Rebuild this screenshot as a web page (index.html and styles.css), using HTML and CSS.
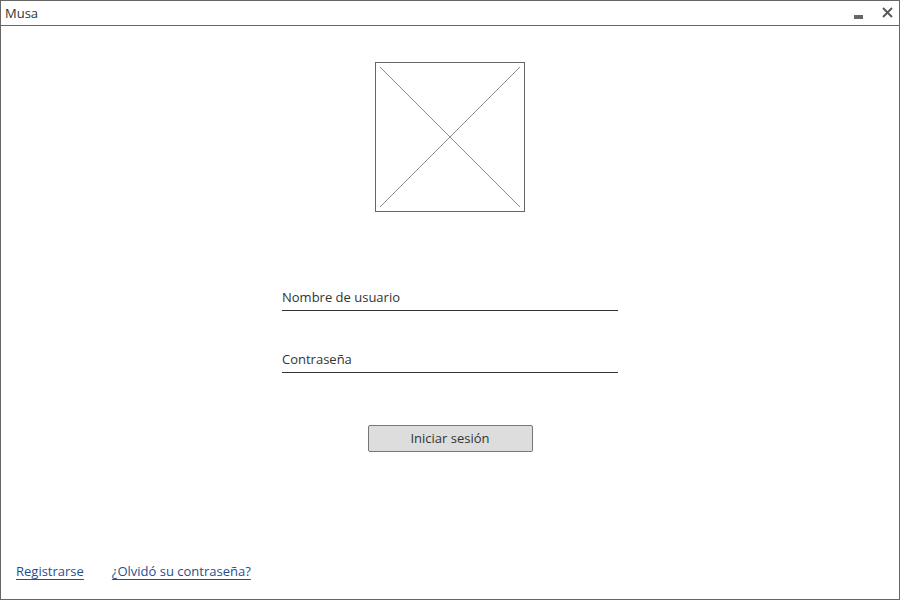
FILE: index.html
```html
<!DOCTYPE html>
<html lang="es">
<head>
<meta charset="utf-8">
<title>Musa</title>
<link rel="stylesheet" href="styles.css">
</head>
<body>
<div class="window">
  <div class="titlebar">
    <span class="title">Musa</span>
    <div class="controls">
      <span class="min"></span>
      <svg class="close" width="11" height="11" viewBox="0 0 11 11"><path d="M1 1L10 10M10 1L1 10" stroke="#555" stroke-width="1.8" fill="none"/></svg>
    </div>
  </div>
  <div class="content">
    <div class="logo">
      <svg width="148" height="148" viewBox="0 0 148 148"><path d="M4 4L144 144M144 4L4 144" stroke="#8a8a8a" stroke-width="1" fill="none"/></svg>
    </div>
    <div class="form">
      <div class="field">Nombre de usuario</div>
      <div class="field second">Contraseña</div>
      <div class="actions"><button class="btn">Iniciar sesión</button></div>
    </div>
    <div class="links">
      <a href="#" class="link">Registrarse</a>
      <a href="#" class="link">¿Olvidó su contraseña?</a>
    </div>
  </div>
</div>
</body>
</html>
```
FILE: styles.css
```css
html, body { margin: 0; padding: 0; background: #fff; }
body { font-family: "Open Sans", "Noto Sans", sans-serif; color: #333; font-size: 13px; }
.window {
  width: 900px; height: 600px; box-sizing: border-box;
  border: 1px solid #666; display: flex; flex-direction: column;
}
.titlebar {
  height: 25px; box-sizing: border-box; border-bottom: 1px solid #666;
  display: flex; align-items: center; justify-content: space-between;
  padding: 0 6px 0 4px;
}
.title { font-size: 13px; color: #333; }
.controls { display: flex; align-items: center; gap: 19px; }
.min { width: 9px; height: 4px; background: #666; margin-top: 8px; }
.close { display: block; margin-top: -2px; }
.content { flex: 1; display: flex; flex-direction: column; align-items: center; }
.logo {
  margin-top: 36px; width: 150px; height: 150px; box-sizing: border-box;
  border: 1px solid #666;
}
.logo svg { display: block; }
.form { width: 336px; margin-top: 77px; }
.field {
  height: 22px; box-sizing: border-box; border-bottom: 1px solid #333;
  line-height: 17px; font-size: 13px; font-weight: 500;
}
.second { margin-top: 40px; }
.actions { display: flex; justify-content: center; margin-top: 52px; }
.btn {
  width: 165px; height: 27px; background: #ddd; border: 1px solid #777;
  border-radius: 2px; font-family: inherit; font-size: 13px; color: #333;
  padding: 0 0 2px;
}
.links { align-self: stretch; margin-top: auto; margin-bottom: 19px; padding-left: 15px; display: flex; gap: 28px; }
.link { color: #1f4f8f; font-size: 13px; text-decoration: underline; text-underline-offset: 3px; }
```
